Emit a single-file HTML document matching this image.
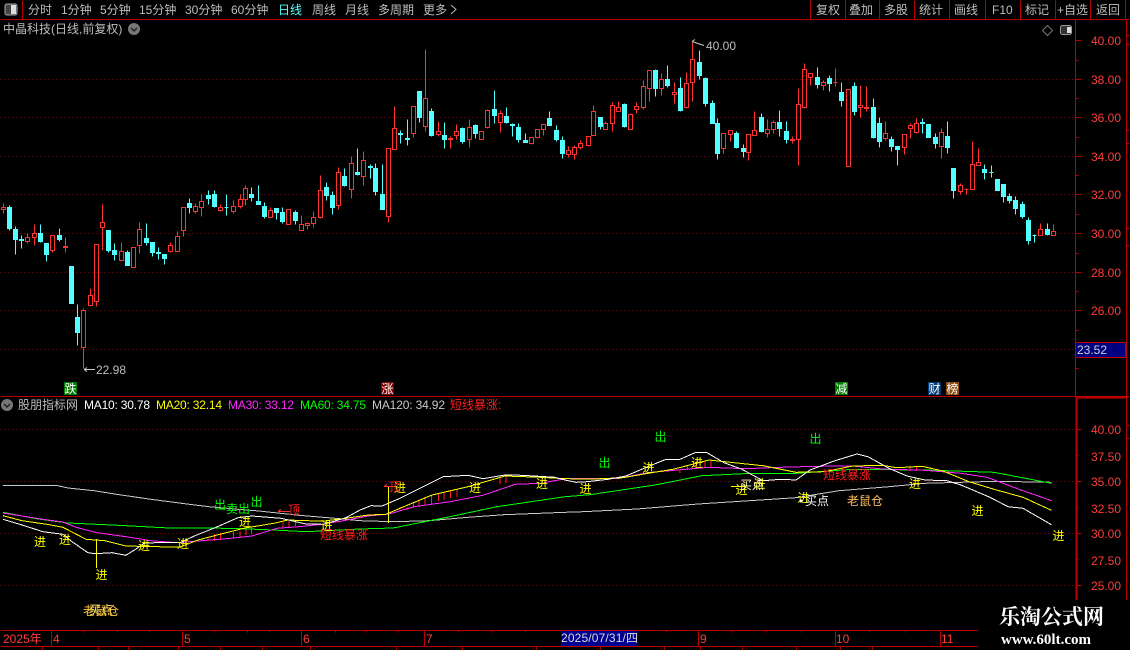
<!DOCTYPE html>
<html><head><meta charset="utf-8">
<style>
html,body{margin:0;padding:0;background:#000;width:1130px;height:650px;overflow:hidden}
svg{display:block}
text{font-family:"Liberation Sans","WenQuanYi Zen Hei","Noto Sans CJK SC",sans-serif;font-size:12px}
.t{fill:#bdbdbd}
.r{fill:#ff3c3c}
.y{fill:#ffff00;text-anchor:middle}
.g{fill:#00ff00;text-anchor:middle}
.m{fill:#fff;text-anchor:middle}
</style></head><body>
<svg width="1130" height="650" viewBox="0 0 1130 650" xmlns="http://www.w3.org/2000/svg">
<rect width="1130" height="650" fill="#000"/>
<g transform="translate(.5 .5)" shape-rendering="crispEdges" fill="none">
<!-- grids -->
<path stroke="#a00000" stroke-dasharray="1 3" d="M0 79H1075M0 117H1075M0 156H1075M0 194H1075M0 233H1075M0 272H1075M0 310H1075M0 349H1075M0 429H1075M0 481H1075M0 533H1075M0 585H1075"/>
<!-- frame lines -->
<path stroke="#b80000" d="M0 19H1130M22 0V19M810 0V19M845 0V19M879 0V19M914 0V19M949 0V19M985 0V19M1020 0V19M1055 0V19M1090 0V19M1125 0V19M1075 19V396M1126 19V600M0 396H1130M0 630H978M0 646H978M51 630V646M182 630V646M301 630V646M424 630V646M698 630V646M835 630V646M940 630V646M84 630v2M117 630v2M149 630v2M214 630v2M247 630v2M269 630v2M335 630v2M366 630v2M398 630v2M458 630v2M492 630v2M525 630v2M597 630v2M666 630v2M732 630v2M766 630v2M801 630v2M869 630v2M905 630v2M42 646v4M98 646v4M128 646v4M178 646v4M220 646v4M262 646v4M310 646v4M396 646v4M462 646v4M536 646v4M600 646v4M664 646v4M700 646v4M742 646v4M796 646v4M840 646v4M872 646v4"/>
<path stroke="#b80000" d="M1075 40h6M1075 60h3M1075 79h6M1075 98h3M1075 117h6M1075 137h3M1075 156h6M1075 175h3M1075 194h6M1075 214h3M1075 233h6M1075 253h3M1075 272h6M1075 291h3M1075 310h6M1075 330h3M1075 349h6M1075 368h3M1126 35h3M1126 44h3M1126 130h3M1126 143h3M1126 228h3M1126 245h3M1126 425h3M1126 438h3M1075 429h6M1075 455h3M1075 481h6M1075 507h3M1075 533h6M1075 559h3M1075 585h6"/>
<path stroke="#c00000" stroke-width="2" d="M1076 397V600M1075 397H1127"/>
<!-- cyan candles -->
<path fill="#54ffff" stroke="#54ffff" d="M9 205V230M7 207h4V228h-4zM15 226V254M13 229h4V239h-4zM21 235V248M19 239h4V240h-4zM40 224V242M38 233h4V241h-4zM46 243V261M44 243h4V254h-4zM59 228V241M57 235h4V239h-4zM71 266V303M69 266h4V303h-4zM77 304V345M75 317h4V332h-4zM108 230V252M106 230h4V250h-4zM114 243V260M112 250h4V254h-4zM127 250V265M125 252h4V265h-4zM146 223V245M144 238h4V242h-4zM152 242V256M150 242h4V252h-4zM158 247V259M156 252h4V253h-4zM164 254V264M162 254h4V258h-4zM189 198V213M187 203h4V207h-4zM208 190V204M206 195h4V198h-4zM214 190V207M212 194h4V206h-4zM226 194V215M224 207h4V207h-4zM251 187V201M249 194h4V197h-4zM258 185V204M256 201h4V204h-4zM264 202V218M262 206h4V216h-4zM276 208V219M274 208h4V212h-4zM282 207V223M280 212h4V221h-4zM295 210V224M293 212h4V220h-4zM326 182V200M324 187h4V195h-4zM332 191V214M330 195h4V207h-4zM344 168V186M342 176h4V185h-4zM357 148V175M355 172h4V174h-4zM370 164V178M368 166h4V167h-4zM375 163V195M373 168h4V191h-4zM382 164V209M380 194h4V209h-4zM400 130V143M398 133h4V134h-4zM407 119V145M405 138h4V139h-4zM419 91V122M417 91h4V117h-4zM431 108V136M429 111h4V135h-4zM444 122V148M442 135h4V139h-4zM462 127V143M460 128h4V141h-4zM475 124V138M473 125h4V133h-4zM494 90V123M492 109h4V115h-4zM506 107V123M504 116h4V122h-4zM512 123V136M510 124h4V125h-4zM518 123V142M516 127h4V139h-4zM525 133V142M523 140h4V142h-4zM549 111V125M547 118h4V125h-4zM556 125V141M554 130h4V139h-4zM562 136V158M560 140h4V153h-4zM600 117V129M598 117h4V126h-4zM624 103V127M622 104h4V126h-4zM655 69V96M653 70h4V88h-4zM667 65V87M665 79h4V85h-4zM680 77V111M678 88h4V110h-4zM699 50V79M697 62h4V75h-4zM705 77V106M703 78h4V103h-4zM712 100V123M710 103h4V123h-4zM717 118V159M715 123h4V153h-4zM736 131V148M734 133h4V147h-4zM743 144V157M741 148h4V151h-4zM761 113V132M759 117h4V131h-4zM779 110V136M777 122h4V128h-4zM786 121V143M784 131h4V139h-4zM817 67V88M815 77h4V84h-4zM829 75V91M827 78h4V83h-4zM841 82V106M839 92h4V100h-4zM854 82V115M852 86h4V111h-4zM873 98V138M871 107h4V137h-4zM879 117V147M877 123h4V141h-4zM891 136V151M889 139h4V146h-4zM897 146V165M895 146h4V149h-4zM922 118V133M920 122h4V123h-4zM928 124V137M926 124h4V137h-4zM935 133V148M933 137h4V143h-4zM947 121V153M945 136h4V147h-4zM953 168V198M951 168h4V190h-4zM984 164V179M982 169h4V172h-4zM991 165V177M989 172h4V172h-4zM997 179V190M995 179h4V190h-4zM1003 184V202M1001 184h4V196h-4zM1009 193V203M1007 196h4V200h-4zM1015 196V214M1013 200h4V208h-4zM1022 201V218M1020 204h4V216h-4zM1028 217V244M1026 220h4V240h-4zM1034 234V242M1032 235h4V235h-4zM1047 223V235M1045 229h4V234h-4z"/>
<!-- red candles -->
<path stroke="#ff3232" d="M3 203V207M3 209V213M1 207h4V209h-4zM27 233V237M27 241V243M25 237h4V241h-4zM34 224V233M34 237V245M32 233h4V237h-4zM52 250V252M50 235h4V250h-4zM65 237V246M65 247V252M63 246h4V247h-4zM83 308V310M83 347V368M81 310h4V347h-4zM90 288V295M88 295h4V305h-4zM96 301V306M94 244h4V301h-4zM102 204V222M102 227V250M100 222h4V227h-4zM121 242V251M119 251h4V260h-4zM133 247V247M131 247h4V267h-4zM139 222V229M139 245V253M137 229h4V245h-4zM170 242V245M170 251V252M168 245h4V251h-4zM177 231V236M175 236h4V251h-4zM183 230V236M181 207h4V230h-4zM195 203V206M195 211V213M193 206h4V211h-4zM201 194V201M201 207V216M199 201h4V207h-4zM220 204V207M220 210V211M218 207h4V210h-4zM233 200V206M233 211V213M231 206h4V211h-4zM240 194V199M240 206V208M238 199h4V206h-4zM245 185V188M245 199V205M243 188h4V199h-4zM270 207V210M268 210h4V217h-4zM288 209V209M286 209h4V224h-4zM301 215V224M299 224h4V230h-4zM307 222V223M307 225V229M305 223h4V225h-4zM313 211V217M313 223V227M311 217h4V223h-4zM320 175V190M320 217V218M318 190h4V217h-4zM338 167V172M338 205V209M336 172h4V205h-4zM351 156V163M351 189V198M349 163h4V189h-4zM363 151V160M363 176V185M361 160h4V176h-4zM388 216V222M386 148h4V216h-4zM394 106V128M392 128h4V149h-4zM413 133V137M411 106h4V133h-4zM425 49V98M425 126V131M423 98h4V126h-4zM438 121V131M438 134V136M436 131h4V134h-4zM450 136V138M450 139V148M448 138h4V139h-4zM456 124V131M456 135V139M454 131h4V135h-4zM469 119V127M469 139V147M467 127h4V139h-4zM481 131V131M479 131h4V139h-4zM487 109V110M487 127V128M485 110h4V127h-4zM500 110V113M500 122V132M498 113h4V122h-4zM531 143V144M529 137h4V143h-4zM537 137V138M535 129h4V137h-4zM543 129V135M541 124h4V129h-4zM568 146V150M568 154V157M566 150h4V154h-4zM574 145V147M574 154V159M572 147h4V154h-4zM580 140V143M580 147V149M578 143h4V147h-4zM588 145V146M586 136h4V145h-4zM593 105V111M591 111h4V135h-4zM605 121V123M603 123h4V129h-4zM612 102V105M612 123V131M610 105h4V123h-4zM618 101V107M616 107h4V111h-4zM630 113V114M628 114h4V129h-4zM636 102V106M636 109V113M634 106h4V109h-4zM643 80V86M643 107V109M641 86h4V107h-4zM649 88V101M647 70h4V88h-4zM661 73V79M661 88V95M659 79h4V88h-4zM674 82V92M674 94V103M672 92h4V94h-4zM686 72V83M686 107V108M684 83h4V107h-4zM692 42V59M692 82V101M690 59h4V82h-4zM723 148V153M721 133h4V148h-4zM730 134V141M728 130h4V134h-4zM748 152V160M746 134h4V152h-4zM754 111V130M752 130h4V135h-4zM767 119V129M767 133V137M765 129h4V133h-4zM773 120V122M773 129V133M771 122h4V129h-4zM792 136V139M792 140V143M790 139h4V140h-4zM798 88V104M798 139V165M796 104h4V139h-4zM804 63V69M804 107V108M802 69h4V107h-4zM810 77V85M808 73h4V77h-4zM823 80V82M823 85V90M821 82h4V85h-4zM835 68V82M835 82V86M833 82h4V82h-4zM846 89h4V166h-4zM860 85V105M860 107V117M858 105h4V107h-4zM866 86V107M866 108V111M864 107h4V108h-4zM885 121V133M885 138V140M883 133h4V138h-4zM904 147V154M902 134h4V147h-4zM910 123V125M910 128V138M908 125h4V128h-4zM916 118V123M916 132V133M914 123h4V132h-4zM941 128V132M941 146V158M939 132h4V146h-4zM960 183V185M960 191V194M958 185h4V191h-4zM966 188V194M964 189h4V189h-4zM972 141V164M970 164h4V189h-4zM978 148V162M976 162h4V165h-4zM1040 223V229M1038 229h4V235h-4zM1053 224V231M1051 231h4V235h-4z"/>
</g>
<!-- arrow marks -->
<path fill="none" stroke="#c8c8c8" d="M84 369.500H95M84 369.500l3-2M84 369.500l3 2M692 41.500l12 4M692 41.500l3-2"/>
<g fill="none" stroke-linejoin="round" shape-rendering="crispEdges">
<!-- hatch -->
<path stroke="#ff2020" d="M208 537v4M214.500 534v7M220.500 533v7M233.500 532v6M240 531v6M246 527v8M251.500 527v7M283 522v6M289 521v6M295.500 520v6M400 507v4M407 507v3M413.500 503v5M419 500v7M425 497v8M431.500 495v9M438.500 493v8M444 492v8M450.500 491v7M457 489v8M500 477v7M506 476v7M680 470v3M687.500 465v5M696.500 461v7M705 461v6M711 460v7M910 466v5M916.500 466v5"/>
<!-- MA120 -->
<polyline stroke="#c8c8c8" points="3,485.300 56,485.300 68,488 94,490.700 119,494.700 151,499.300 187,504 209,506.700 238,509.300 259,511 299,515.300 335,518.300 360,520.700 393,521.700 429,520.700 468,517.300 504,514.700 565,512.300 583,511.700 637,509 698,504 796,497.700 839,490.700 889,486.700 925,483.300 997,481.300 1051.500,482.300"/>
<!-- MA60 -->
<polyline stroke="#00ff00" points="3,512.300 36,518.700 68,523 112,525 169,528 231,528.300 274,530 306,531.700 360,529 393,528 422,522.300 447,517.300 497,506.700 565,496.700 590,494.700 655,485 702,475.700 752,473.300 796,473.300 853,469.300 925,470 994,472.300 1051.500,483.300"/>
<!-- MA30 -->
<polyline stroke="#ff28ff" points="3,513 22,516 43,519.300 63,522 76,527.300 97,532.700 126,536.700 151,540.700 177,542.700 198,541 231,538.300 252,536 277,528.300 299,526.700 321,524.300 342,521 368,516 389,514 414,506.700 450,501.700 483,495.300 515,484.300 541,483.300 565,478.700 619,478.300 648,472.700 677,470 709,467.300 745,468.700 781,467.300 817,466.300 853,466 882,469 925,470.300 961,473.300 987,477.300 1019,489.300 1051.500,500.700"/>
<!-- MA20 -->
<polyline stroke="#ffff00" points="3,515.700 22,520.700 47,524.300 63,527.300 86,539.300 105,540.700 126,546 155,546.700 180,547 198,540 216,535.300 245,528 274,523.300 288,520 306,520.700 324,521 346,518.300 368,515 386,514.300 400,508.300 432,495 468,486.700 505,476 541,477.300 565,478.700 594,479 623,477.700 648,473.300 673,469.300 709,460 734,462.700 763,465.700 796,472.300 824,471.700 853,466 882,465.300 897,467.700 922,466.300 943,471 969,481.700 994,489.300 1023,497.300 1051.500,510.300"/>
<!-- MA10 -->
<polyline stroke="#ffffff" points="3,519.300 22,525 43,531.700 63,534.300 72,541.700 88,552.700 95,553.700 112,552.700 126,555.300 137,548.300 144,543.300 155,542.700 180,542.700 195,535.700 216,527.300 238,517.700 252,516 281,518.300 306,524 324,524.300 346,517.700 360,510 371,505.700 382,506 400,498.300 443,476.700 468,475.300 483,478.700 505,475 522,475.300 555,477.300 565,480 576,482.300 587,481.700 608,479.300 626,476 644,468.300 666,459.300 680,459.300 695,452.700 707,452.700 724,462.700 742,469.300 763,480.700 781,479.300 796,480 810,470 835,460.700 857,454 868,456.700 889,468.300 907,476 925,480 947,480.700 961,485 990,497.300 1008,506.700 1023,508.300 1051.500,524.700"/>
<!-- yellow verticals -->
<path stroke="#ffff00" d="M96.500 539V568M388.500 487V523"/>
<path stroke="#ff3232" d="M384 486.500H396M384 486.500l3-2"/>
<path stroke="#ff3232" d="M278 511.500H290M278 511.500l3-2"/>
<path stroke="#ffff00" d="M731 486.500H745"/>
</g>
<!-- top toolbar -->
<rect x="5" y="4" width="12" height="11" rx="2" fill="#444" stroke="#aaa"/><rect x="11" y="5" width="5" height="9" fill="#ddd"/>
<g class="t">
<text x="28" y="14">分时</text><text x="61" y="14">1分钟</text><text x="100" y="14">5分钟</text><text x="139" y="14">15分钟</text><text x="185" y="14">30分钟</text><text x="231" y="14">60分钟</text>
<text x="278" y="14" style="fill:#54ffff">日线</text><text x="312" y="14">周线</text><text x="345" y="14">月线</text><text x="378" y="14">多周期</text><text x="423" y="14">更多</text>
<text x="816" y="14">复权</text><text x="849" y="14">叠加</text><text x="884" y="14">多股</text><text x="919" y="14">统计</text><text x="954" y="14">画线</text><text x="992" y="14">F10</text><text x="1025" y="14">标记</text><text x="1057" y="14">+自选</text><text x="1096" y="14">返回</text>
<text x="3" y="33">中晶科技(日线,前复权)</text>
<text x="706" y="50">40.00</text><text x="96" y="374">22.98</text>
<text x="18" y="409">股朋指标网</text>
</g>
<path fill="none" stroke="#bbb" d="M451 5l5 4.500-5 4.500"/>
<circle cx="134" cy="29" r="6" fill="#777"/><path fill="none" stroke="#222" stroke-width="1.500" d="M131 28l3 3 3-3"/>
<circle cx="7" cy="405" r="6" fill="#777"/><path fill="none" stroke="#222" stroke-width="1.500" d="M4 404l3 3 3-3"/>
<path fill="none" stroke="#777" d="M1047.500 25.500l5 5-5 5-5-5z"/>
<rect x="1060.500" y="25.500" width="11" height="9" rx="2" fill="#333" stroke="#999"/><rect x="1067" y="27" width="4" height="6" fill="#ddd"/>
<!-- price axis labels -->
<g class="r">
<text x="1091" y="45">40.00</text><text x="1091" y="84">38.00</text><text x="1091" y="122">36.00</text><text x="1091" y="161">34.00</text><text x="1091" y="199">32.00</text><text x="1091" y="238">30.00</text><text x="1091" y="277">28.00</text><text x="1091" y="315">26.00</text>
<text x="1091" y="434">40.00</text><text x="1091" y="461">37.50</text><text x="1091" y="486">35.00</text><text x="1091" y="513">32.50</text><text x="1091" y="538">30.00</text><text x="1091" y="565">27.50</text><text x="1091" y="590">25.00</text>
</g>
<rect x="1075.500" y="342.500" width="50" height="15" fill="#000080" stroke="#c00000"/>
<text x="1077" y="354" style="fill:#d0d0d0">23.52</text>
<!-- markers -->
<rect x="64" y="382" width="13" height="13" fill="#007a00"/><text x="64.500" y="393" style="fill:#fff">跌</text>
<rect x="381" y="382" width="13" height="13" fill="#800000"/><text x="381.500" y="393" style="fill:#fff">涨</text>
<rect x="835" y="382" width="13" height="13" fill="#007a00"/><text x="835.500" y="393" style="fill:#fff">减</text>
<rect x="928" y="382" width="13" height="13" fill="#003a78"/><text x="928.500" y="393" style="fill:#fff">财</text>
<rect x="946" y="382" width="13" height="13" fill="#8a4a10"/><text x="946.500" y="393" style="fill:#fff">榜</text>
<!-- legend -->
<text x="84" y="409" style="fill:#fff" textLength="66">MA10: 30.78</text>
<text x="156" y="409" style="fill:#ffff00" textLength="66">MA20: 32.14</text>
<text x="228" y="409" style="fill:#ff28ff" textLength="66">MA30: 33.12</text>
<text x="300" y="409" style="fill:#00ff00" textLength="66">MA60: 34.75</text>
<text x="372" y="409" style="fill:#c8c8c8" textLength="73">MA120: 34.92</text>
<text x="450" y="409" style="fill:#ff2020">短线暴涨:</text>
<!-- signals -->
<g class="y">
<text x="40" y="546">进</text><text x="65" y="544">进</text><text x="101.500" y="579">进</text><text x="144" y="550">进</text><text x="183" y="548">进</text><text x="245" y="526">进</text><text x="326.500" y="530">进</text><text x="400" y="492">进</text><text x="475" y="492">进</text><text x="542" y="488">进</text><text x="585.500" y="493">进</text><text x="648.500" y="472">进</text><text x="697" y="467">进</text><text x="741.500" y="494">进</text><text x="759.500" y="488">进</text><text x="803.500" y="502">进</text><text x="915" y="488">进</text><text x="977.500" y="515">进</text><text x="1058.500" y="540">进</text>
</g>
<g class="g">
<text x="220" y="509">出</text><text x="256.500" y="506">出</text><text x="604.500" y="467">出</text><text x="660.500" y="441">出</text><text x="815.500" y="443">出</text><text x="238" y="513">卖出</text>
</g>
<text x="294" y="514" style="fill:#ff2020;text-anchor:middle">顶</text>
<text x="395" y="491" style="fill:#ff2020;text-anchor:middle">顶</text>
<text x="344" y="539" style="fill:#ff2020;text-anchor:middle">短线暴涨</text>
<text x="847" y="479" style="fill:#ff2020;text-anchor:middle">短线暴涨</text>
<text x="865" y="505" style="fill:#ffc060;text-anchor:middle">老鼠仓</text>
<text x="101" y="615" style="fill:#ffc840;text-anchor:middle">老鼠仓</text>
<text x="101" y="614" style="fill:#ffe060;text-anchor:middle">买点</text>
<text x="817" y="505" class="m">买点</text>
<text x="752" y="489" style="fill:#ffffcc;text-anchor:middle">买点</text>
<circle cx="801" cy="501" r="1.500" fill="#fff"/>
<!-- time axis -->
<g class="r">
<text x="3" y="643">2025年</text><text x="53" y="643">4</text><text x="184" y="643">5</text><text x="303" y="643">6</text><text x="426" y="643">7</text><text x="700" y="643">9</text><text x="836" y="643">10</text><text x="941" y="643">11</text>
</g>
<rect x="561" y="631" width="77" height="15" fill="#000090"/>
<text x="561" y="642" style="fill:#d8d8d8" textLength="77">2025/07/31/四</text>
<!-- watermark -->
<rect x="978" y="600" width="152" height="50" fill="#000"/>
<text x="999" y="624" style="font-family:'Liberation Serif','Noto Serif CJK SC',serif;font-size:21px;font-weight:700;fill:#fff">乐淘公式网</text>
<text x="1001" y="644" style="font-family:'Liberation Serif',serif;font-size:15px;font-weight:700;fill:#fff">www.60lt.com</text>
</svg>
</body></html>
